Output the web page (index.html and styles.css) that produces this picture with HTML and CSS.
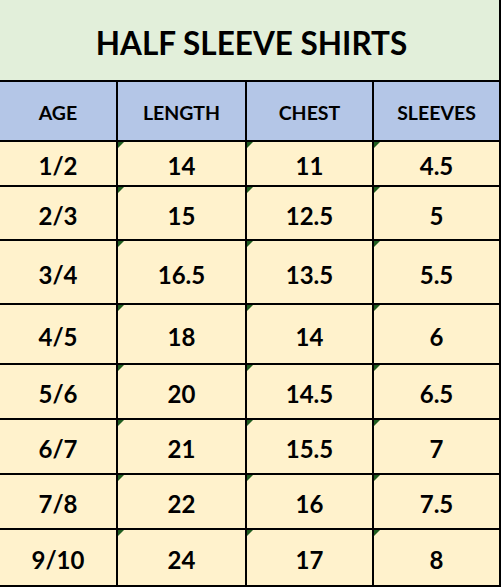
FILE: index.html
```html
<!DOCTYPE html>
<html>
<head>
<meta charset="utf-8">
<link rel="stylesheet" href="styles.css">
</head>
<body>
<div class="sheet">
  <div class="title">HALF SLEEVE SHIRTS</div>
  <div class="hd">AGE</div><div class="hd">LENGTH</div><div class="hd">CHEST</div><div class="hd">SLEEVES</div>
  <div class="c">1/2</div><div class="c t">14</div><div class="c t">11</div><div class="c t">4.5</div>
  <div class="c">2/3</div><div class="c t">15</div><div class="c t">12.5</div><div class="c t">5</div>
  <div class="c">3/4</div><div class="c t">16.5</div><div class="c t">13.5</div><div class="c t">5.5</div>
  <div class="c">4/5</div><div class="c t">18</div><div class="c t">14</div><div class="c t">6</div>
  <div class="c">5/6</div><div class="c t">20</div><div class="c t">14.5</div><div class="c t">6.5</div>
  <div class="c">6/7</div><div class="c t">21</div><div class="c t">15.5</div><div class="c t">7</div>
  <div class="c">7/8</div><div class="c t">22</div><div class="c t">16</div><div class="c t">7.5</div>
  <div class="c">9/10</div><div class="c t">24</div><div class="c t">17</div><div class="c t">8</div>
</div>
</body>
</html>
```
FILE: styles.css
```css
html, body {
  margin: 0;
  padding: 0;
  background: #ffffff;
}
.sheet {
  display: grid;
  grid-template-columns: 116px 127px 125px 125px;
  grid-template-rows: 80px 58px 43px 52px 62px 58px 53px 53px 53px 55px;
  gap: 2px;
  padding: 0 2px 2px 0;
  width: 501px;
  box-sizing: border-box;
  background: #000;
  font-family: Lato, "Open Sans", sans-serif;
  font-weight: 700;
  color: #000;
}
.title {
  grid-column: 1 / -1;
  background: #e2efda;
  display: flex;
  align-items: center;
  justify-content: center;
  font-size: 31.5px;
  padding-top: 5px;
  padding-left: 4px;
}
.hd {
  background: #b4c6e7;
  display: flex;
  align-items: center;
  justify-content: center;
  font-size: 19.5px;
  padding-top: 3px;
}
.c {
  position: relative;
  background: #fff2cc;
  display: flex;
  align-items: center;
  justify-content: center;
  font-size: 24px;
  padding-top: 4px;
}
.t::before {
  content: "";
  position: absolute;
  left: 0;
  top: 0;
  width: 0;
  height: 0;
  border-top: 6px solid #1f5c1f;
  border-right: 6px solid transparent;
}
```
